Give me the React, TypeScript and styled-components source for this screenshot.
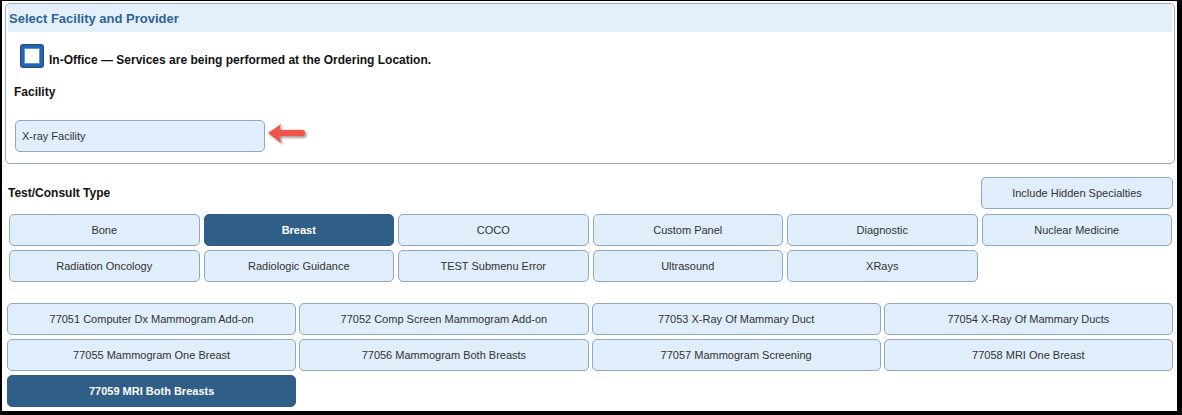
import React from 'react'
import styled, { createGlobalStyle } from 'styled-components'

const GlobalStyle = createGlobalStyle`
  html, body {
    margin: 0;
    padding: 0;
    background: #000;
    font-family: "Liberation Sans", Arial, sans-serif;
  }
`

const Frame = styled.div`
  margin: 1px 5px 0 2px;
  height: 410px;
  background: #fff;
  box-sizing: border-box;
  overflow: hidden;
`

const Panel = styled.section`
  margin: 2px 2px 0 3px;
  border: 1px solid #9aabbd;
  border-radius: 5px;
  padding: 0 2px 11px;
`

const PanelHeader = styled.h2`
  margin: 0;
  height: 28px;
  display: flex;
  align-items: center;
  padding-left: 1px;
  background: #e3f0fb;
  color: #2f6394;
  font-size: 13px;
  font-weight: bold;
`

const CheckRow = styled.label`
  display: flex;
  align-items: flex-end;
  gap: 6px;
  margin: 13px 0 0 13px;
  font-size: 12px;
  line-height: 14px;
  font-weight: bold;
  color: #111;
`

const CheckBox = styled.span`
  width: 22px;
  height: 22px;
  box-sizing: border-box;
  border: 3px solid #2564ad;
  border-radius: 2px;
  background: #fff;
  box-shadow: inset 0 0 0 1px #5b95d4, 0 0 0 1px #1b4f8c;
`

const FieldLabel = styled.div`
  margin: 18px 0 0 6px;
  font-size: 12px;
  font-weight: bold;
  color: #111;
  line-height: 14px;
`

const FieldRow = styled.div`
  display: flex;
  align-items: center;
  gap: 2px;
  margin: 21px 0 0 7px;
`

const SelectBox = styled.div`
  width: 250px;
  height: 32px;
  box-sizing: border-box;
  display: flex;
  align-items: center;
  padding-left: 6px;
  background: #e1eefb;
  border: 1px solid #8ea7c2;
  border-radius: 5px;
  font-size: 11px;
  color: #333;
`

const Arrow = styled.svg`
  display: block;
  margin-top: -2px;
`

const TypeBar = styled.div`
  display: flex;
  align-items: center;
  justify-content: space-between;
  margin: 13px 4px 0 6px;
`

const TypeLabel = styled.div`
  font-size: 12px;
  font-weight: bold;
  color: #111;
`

const Grid = styled.div<{ $cols: number; $gap: number }>`
  display: grid;
  grid-template-columns: repeat(${p => p.$cols}, 1fr);
  column-gap: ${p => p.$gap}px;
  row-gap: 4px;
`

const TypeGrid = styled(Grid)`
  margin: 5px 5px 0 7px;
`

const CodeGrid = styled(Grid)`
  margin: 21px 4px 0 5px;
`

const Btn = styled.button<{ $active?: boolean }>`
  height: 32px;
  width: 100%;
  padding: 0 4px;
  box-sizing: border-box;
  border-radius: 5px;
  border: 1px solid ${p => (p.$active ? '#2f5d87' : '#8ea7c2')};
  background: ${p => (p.$active ? '#2f5e89' : '#e0edfa')};
  color: ${p => (p.$active ? '#fff' : '#333')};
  font-family: "Liberation Sans", Arial, sans-serif;
  font-size: 11px;
  font-weight: ${p => (p.$active ? 'bold' : 'normal')};
  cursor: pointer;
  white-space: nowrap;
`

const HiddenBtn = styled(Btn)`
  width: 192px;
`

const types = [
  'Bone', 'Breast', 'COCO', 'Custom Panel', 'Diagnostic', 'Nuclear Medicine',
  'Radiation Oncology', 'Radiologic Guidance', 'TEST Submenu Error', 'Ultrasound', 'XRays',
]

const codes = [
  '77051 Computer Dx Mammogram Add-on',
  '77052 Comp Screen Mammogram Add-on',
  '77053 X-Ray Of Mammary Duct',
  '77054 X-Ray Of Mammary Ducts',
  '77055 Mammogram One Breast',
  '77056 Mammogram Both Breasts',
  '77057 Mammogram Screening',
  '77058 MRI One Breast',
  '77059 MRI Both Breasts',
]

export default function App() {
  return (
    <>
      <GlobalStyle />
      <Frame>
        <Panel>
          <PanelHeader>Select Facility and Provider</PanelHeader>
          <CheckRow>
            <CheckBox />
            In-Office — Services are being performed at the Ordering Location.
          </CheckRow>
          <FieldLabel>Facility</FieldLabel>
          <FieldRow>
            <SelectBox>X-ray Facility</SelectBox>
            <Arrow width="42" height="26" viewBox="0 0 42 26">
              <defs>
                <filter id="sh" x="-20%" y="-30%" width="150%" height="170%">
                  <feDropShadow dx="1.5" dy="1.5" stdDeviation="1.2" floodColor="#000" floodOpacity="0.45" />
                </filter>
              </defs>
              <path
                d="M1 11 L14 2 L12.5 8 L35 7.8 Q38 7.8 38 11 Q38 14.2 35 14.2 L12.5 14 L14 21 Z"
                fill="#f0554a"
                filter="url(#sh)"
              />
            </Arrow>
          </FieldRow>
        </Panel>

        <TypeBar>
          <TypeLabel>Test/Consult Type</TypeLabel>
          <HiddenBtn>Include Hidden Specialties</HiddenBtn>
        </TypeBar>

        <TypeGrid $cols={6} $gap={4}>
          {types.map(t => (
            <Btn key={t} $active={t === 'Breast'}>{t}</Btn>
          ))}
        </TypeGrid>

        <CodeGrid $cols={4} $gap={3}>
          {codes.map(c => (
            <Btn key={c} $active={c.startsWith('77059')}>{c}</Btn>
          ))}
        </CodeGrid>
      </Frame>
    </>
  )
}
